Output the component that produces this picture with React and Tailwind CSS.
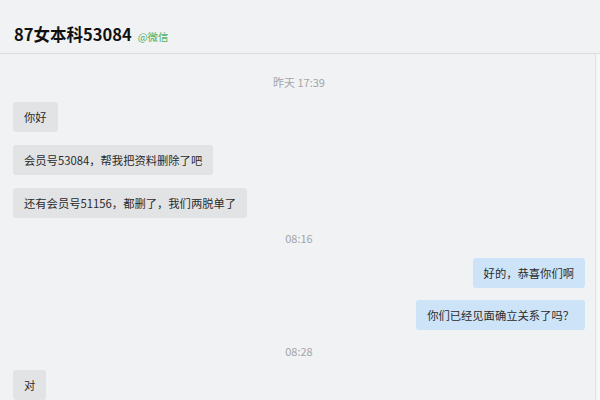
const font = { fontFamily: '"Noto Sans CJK SC", "Noto Sans", sans-serif' };

function Stamp({ children, className = "" }) {
  return (
    <div className={`h-[20px] text-center text-[11px] leading-[20px] text-[#a3a5a8] ${className}`}>
      {children}
    </div>
  );
}

function Bubble({ children, mine = false, className = "" }) {
  return (
    <div className={`flex ${mine ? "justify-end" : "justify-start"} ${className}`}>
      <div
        className={`h-[30px] rounded-[3px] px-[11px] text-[11.3px] leading-[30px] text-[#2b2b2b] whitespace-nowrap ${
          mine ? "bg-[#cde4f8]" : "bg-[#e2e3e5]"
        }`}
      >
        {children}
      </div>
    </div>
  );
}

export default function App() {
  return (
    <div className="h-[400px] w-[600px] overflow-hidden bg-[#f1f2f4]" style={font}>
      {/* Header */}
      <div className="h-[54px] border-b border-[#dcdde0] px-[14px] pt-[24px]">
        <div className="flex items-baseline gap-[6px] leading-[20px]">
          <span className="text-[16.5px] font-bold text-[#111]">87女本科53084</span>
          <span className="text-[10.5px] text-[#4fb15c]">@微信</span>
        </div>
      </div>

      <div className="flex">
        {/* Messages */}
        <div className="flex-1 pl-[13px] pr-[10px]">
          <Stamp className="mt-[18px]">昨天 17:39</Stamp>
          <Bubble className="mt-[10px]">你好</Bubble>
          <Bubble className="mt-[13px]">会员号53084，帮我把资料删除了吧</Bubble>
          <Bubble className="mt-[13px]">还有会员号51156，都删了，我们两脱单了</Bubble>
          <Stamp className="mt-[10px]">08:16</Stamp>
          <Bubble mine className="mt-[10px]">好的，恭喜你们啊</Bubble>
          <Bubble mine className="mt-[12px]">你们已经见面确立关系了吗？</Bubble>
          <Stamp className="mt-[11px]">08:28</Stamp>
          <Bubble className="mt-[9px]">对</Bubble>
        </div>
        {/* Scrollbar track */}
        <div className="h-[346px] w-[5px] border-l border-[#dfe0e2] bg-[#f5f6f7]" />
      </div>
    </div>
  );
}
